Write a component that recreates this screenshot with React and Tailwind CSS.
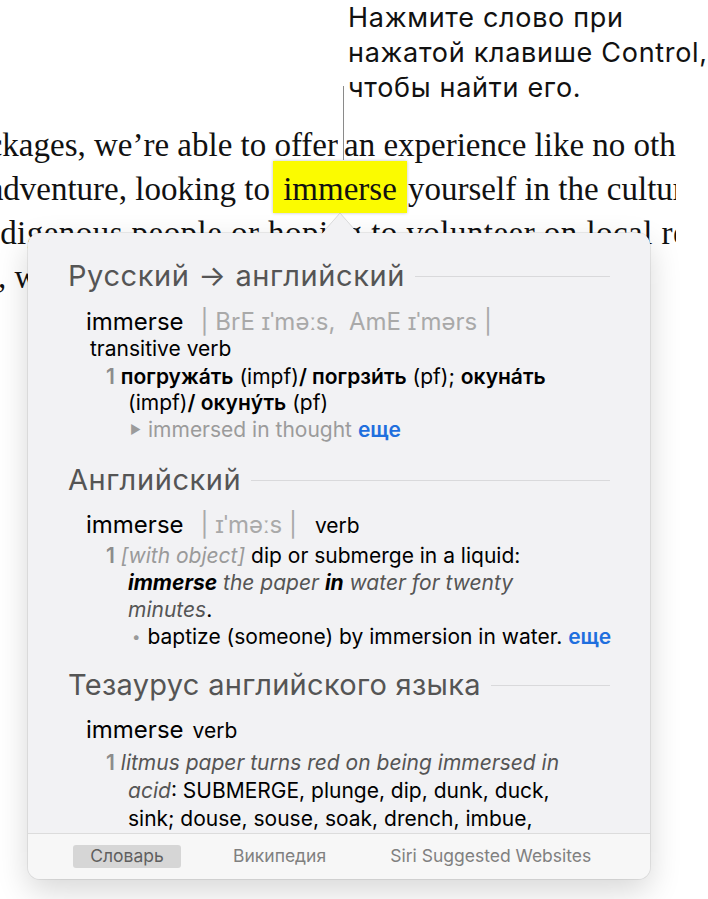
export default function App() {
  return (
    <div className="relative w-[708px] h-[899px] overflow-hidden bg-white font-['Inter',sans-serif]">
      {/* callout text */}
      <div className="pl-[348px] text-[27px] tracking-[0.7px] leading-[35px] text-[#111] whitespace-nowrap">
        <div>Нажмите слово при</div>
        <div>нажатой клавише Control,</div>
        <div>чтобы найти его.</div>
      </div>

      {/* serif article text */}
      <div className="mt-[18px] w-[676px] overflow-hidden font-['Liberation_Serif',serif] text-[33px] leading-[44px] text-[#111] whitespace-nowrap">
        <div className="flex">
          <div className="w-[338px] shrink-0 flex justify-end overflow-hidden">
            <span className="shrink-0">packages, we’re able to offer</span>
          </div>
          <div className="pl-[6px] shrink-0">an experience like no other</div>
        </div>
        <div className="flex items-start">
          <div className="w-[273px] shrink-0 flex justify-end overflow-hidden">
            <span className="shrink-0 pr-[3px]">adventure, looking to</span>
          </div>
          <div className="w-[134px] shrink-0 -mt-[6px] pt-[6px] pb-[2px] -mb-[2px] bg-[#fbfb00] text-center shadow-[0_0_3px_rgba(0,0,0,0.25)]">
            immerse
          </div>
          <div className="shrink-0 pl-[1px]">yourself in the culture</div>
        </div>
        <div className="flex">
          <div className="w-[688px] shrink-0 flex justify-end overflow-hidden">
            <span className="shrink-0 tracking-[0.45px]">indigenous people or hoping to volunteer on local re</span>
          </div>
        </div>
        <div className="-ml-[2px]">, with</div>
      </div>

      {/* callout line */}
      <div className="absolute left-[343px] top-[86px] w-px h-[74px] bg-[#8a8a8a]" />

      {/* popover */}
      <div className="absolute left-[28px] top-[233px] w-[622px] h-[646px] rounded-[12px] bg-[#f2f2f4] shadow-[0_12px_32px_rgba(0,0,0,0.16),0_0_0_1px_rgba(0,0,0,0.07)] flex flex-col overflow-hidden">
        <div className="flex-1 overflow-hidden px-[40px] pt-[25px] text-black whitespace-nowrap">
          {/* Section 1 */}
          <div className="flex items-center h-[36px]">
            <span className="text-[29px] tracking-[0.6px] text-[#555] shrink-0">Русский → английский</span>
            <div className="ml-[10px] flex-1 h-px bg-[#d9d9db]" />
          </div>
          <div className="mt-[14px] pl-[18px] h-[28px] leading-[28px]">
            <span className="text-[24px] text-black">immerse</span>
            <span className="text-[24px] text-[#a9a9a9] ml-[17px]">| BrE ɪˈməːs,&nbsp; AmE ɪˈmərs |</span>
          </div>
          <div className="pl-[22px] text-[21px] leading-[26px]">transitive verb</div>
          <div className="mt-[2px] pl-[60px] text-[21px] leading-[26px]">
            <div className="-ml-[22px]">
              <span className="font-semibold text-[#8c8c8c]">1</span>{" "}
              <span className="font-semibold">погружа́ть</span> (impf)<span className="font-semibold">/ погрзи́ть</span> (pf); <span className="font-semibold">окуна́ть</span>
            </div>
            <div>
              (impf)<span className="font-semibold">/ окуну́ть</span> (pf)
            </div>
          </div>
          <div className="mt-[1px] pl-[62px] text-[21px] leading-[26px] text-[#9b9b9b]">
            <span className="text-[12px] align-[3px]">▶</span>
            <span className="ml-[7px]">immersed in thought</span>{" "}
            <span className="font-semibold text-[#1f6fde]">еще</span>
          </div>

          {/* Section 2 */}
          <div className="mt-[19px] flex items-center h-[36px]">
            <span className="text-[29px] tracking-[0.6px] text-[#555] shrink-0">Английский</span>
            <div className="ml-[10px] flex-1 h-px bg-[#d9d9db]" />
          </div>
          <div className="mt-[13px] pl-[18px] h-[28px] leading-[28px]">
            <span className="text-[24px] text-black">immerse</span>
            <span className="text-[24px] text-[#a9a9a9] ml-[17px]">| ɪˈməːs |</span>
            <span className="text-[21px] ml-[18px]">verb</span>
          </div>
          <div className="mt-[3px] pl-[60px] text-[21px] leading-[27px]">
            <div className="-ml-[22px]">
              <span className="font-semibold text-[#8c8c8c]">1</span>{" "}
              <span className="italic text-[#9a9a9a]">[with object]</span> dip or submerge in a liquid:
            </div>
            <div className="italic text-[#555]">
              <span className="font-bold text-black">immerse</span> the paper <span className="font-bold text-black">in</span> water for twenty
            </div>
            <div>
              <span className="italic text-[#555]">minutes</span>.
            </div>
            <div className="ml-[4px]">
              <span className="text-[#9a9a9a] text-[15px] align-[2px]">•</span>
              <span className="ml-[7px]">baptize (someone) by immersion in water.</span>{" "}
              <span className="font-semibold text-[#1f6fde]">еще</span>
            </div>
          </div>

          {/* Section 3 */}
          <div className="mt-[17px] flex items-center h-[36px]">
            <span className="text-[29px] tracking-[0.3px] text-[#555] shrink-0">Тезаурус английского языка</span>
            <div className="ml-[10px] flex-1 h-px bg-[#d9d9db]" />
          </div>
          <div className="mt-[13px] pl-[18px] h-[28px] leading-[28px]">
            <span className="text-[24px] text-black">immerse</span>
            <span className="text-[21px] ml-[9px]">verb</span>
          </div>
          <div className="mt-[5px] pl-[60px] text-[21px] leading-[28px]">
            <div className="-ml-[22px]">
              <span className="font-semibold text-[#8c8c8c]">1</span>{" "}
              <span className="italic text-[#555]">litmus paper turns red on being immersed in</span>
            </div>
            <div>
              <span className="italic text-[#555]">acid</span>: SUBMERGE, plunge, dip, dunk, duck,
            </div>
            <div>sink; douse, souse, soak, drench, imbue,</div>
            <div>bathe, wet, saturate;</div>
          </div>
        </div>

        {/* footer tabs */}
        <div className="h-[46px] shrink-0 border-t border-[#dcdcdc] bg-[#f7f7f7] flex items-center pl-[45px] text-[17.5px] text-[#808080] whitespace-nowrap">
          <div className="w-[108px] h-[23px] rounded-[3px] bg-[#d6d6d6] text-[#5f5f5f] flex items-center justify-center">Словарь</div>
          <div className="ml-[52px]">Википедия</div>
          <div className="ml-[64px]">Siri Suggested Websites</div>
        </div>
      </div>

      {/* popover arrow */}
      <svg className="absolute left-[321px] top-[212px]" width="38" height="23" viewBox="0 0 38 23">
        <path d="M0 23 L19 1 L38 23 Z" fill="#f2f2f4" />
        <path d="M0.5 22 L19 1 L37.5 22" fill="none" stroke="rgba(0,0,0,0.12)" strokeWidth="1" />
      </svg>
    </div>
  );
}
